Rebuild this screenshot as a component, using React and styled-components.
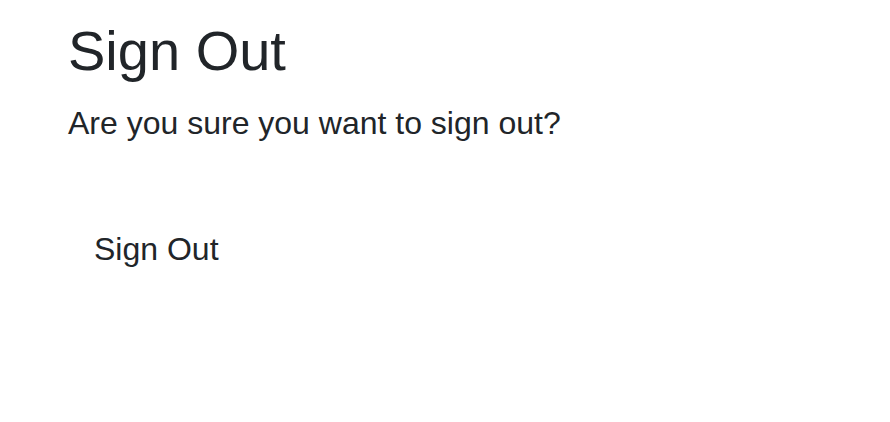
import React from "react";
import styled, { createGlobalStyle } from "styled-components";

const Global = createGlobalStyle`
  body {
    margin: 0;
    background: #fff;
    color: #212529;
    font-family: "Liberation Sans", Arial, Helvetica, sans-serif;
  }
`;

const Page = styled.main`
  padding: 17px 68px 0;
  display: flex;
  flex-direction: column;
  align-items: flex-start;
`;

const Title = styled.h1`
  margin: 0 0 15px;
  font-size: 56px;
  font-weight: 400;
  line-height: 1.2;
`;

const Lead = styled.p`
  margin: 0;
  font-size: 32px;
  line-height: 1.5;
`;

const Form = styled.form`
  margin-top: 66px;
`;

const Button = styled.button`
  font-family: inherit;
  font-size: 32px;
  line-height: 1.5;
  color: #212529;
  background: transparent;
  border: none;
  padding: 12px 26px;
  margin: 0;
  cursor: pointer;
`;

export default function App() {
  return (
    <>
      <Global />
      <Page>
        <Title>Sign Out</Title>
        <Lead>Are you sure you want to sign out?</Lead>
        <Form onSubmit={e => e.preventDefault()}>
          <Button type="submit">Sign Out</Button>
        </Form>
      </Page>
    </>
  );
}
